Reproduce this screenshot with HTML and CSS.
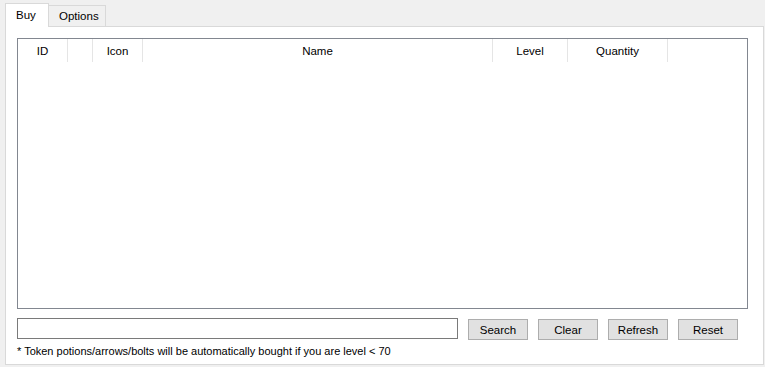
FILE: index.html
```html
<!DOCTYPE html>
<html lang="en">
<head>
<meta charset="UTF-8" />
<title>Shop</title>
<link rel="stylesheet" href="styles.css">
</head>
<body>

<!-- Tabs -->
<div class="tabs">
  <div class="tab active">Buy</div>
  <div class="tab">Options</div>
</div>

<div class="panel">
  <div class="list">
    <div class="list-head">
      <div class="col c-id">ID</div>
      <div class="col c-blank"></div>
      <div class="col c-icon">Icon</div>
      <div class="col c-name">Name</div>
      <div class="col c-level">Level</div>
      <div class="col c-qty">Quantity</div>
    </div>
  </div>

  <div class="controls">
    <input class="search" type="text">
    <button class="btn">Search</button>
    <button class="btn">Clear</button>
    <button class="btn">Refresh</button>
    <button class="btn">Reset</button>
  </div>

  <div class="note">* Token potions/arrows/bolts will be automatically bought if you are level &lt; 70</div>
</div>

</body>
</html>
```

FILE: styles.css
```css
body {
  margin: 0;
  background: #f0f0f0;
  font-family: "Liberation Sans", Arial, sans-serif;
  font-size: 11.5px;
  color: #000;
  width: 765px;
  height: 367px;
  overflow: hidden;
}

.tabs {
  display: flex;
  align-items: flex-end;
  padding: 3px 0 0 5px;
  height: 23px;
}

.tab {
  box-sizing: border-box;
  height: 21px;
  border: 1px solid #d9d9d9;
  border-bottom: none;
  background: #f0f0f0;
  line-height: 21px;
}

.tab.active {
  height: 24px;
  margin-bottom: -1px;
  background: #fff;
  position: relative;
  z-index: 1;
  width: 44px;
  padding: 0 0 0 10px;
  line-height: 22px;
}

.tab:not(.active) {
  width: 58px;
  margin-left: -1px;
  padding: 0 0 0 10px;
}

.panel {
  box-sizing: border-box;
  margin-left: 5px;
  width: 759px;
  height: 339px;
  background: #fff;
  border: 1px solid #d9d9d9;
  padding: 11px 14px 0 11px;
}

.list {
  box-sizing: border-box;
  height: 271px;
  width: 731px;
  border: 1px solid #828790;
  background: #fff;
}

.list-head {
  display: flex;
  height: 23px;
}

.col {
  box-sizing: border-box;
  border-right: 1px solid #e5e5e5;
  text-align: center;
  line-height: 24px;
  color: #000;
}

.c-id { width: 50px; }
.c-blank { width: 25px; }
.c-icon { width: 50px; }
.c-name { width: 350px; }
.c-level { width: 75px; }
.c-qty { width: 100px; }

.controls {
  display: flex;
  align-items: flex-start;
  margin-top: 9px;
}

.search {
  box-sizing: border-box;
  width: 441px;
  height: 21px;
  margin: 0 10px 0 0;
  border: 1px solid #7a7a7a;
  background: #fff;
  padding: 0 3px;
  outline: none;
}

.btn {
  box-sizing: border-box;
  width: 60px;
  height: 21px;
  margin: 1px 10px 0 0;
  border: 1px solid #adadad;
  background: #e1e1e1;
  font-family: inherit;
  font-size: 11.5px;
  color: #000;
  padding: 0;
  line-height: 20px;
}

.note {
  margin-top: 3px;
  line-height: 16px;
  white-space: nowrap;
  font-size: 11px;
}
```
